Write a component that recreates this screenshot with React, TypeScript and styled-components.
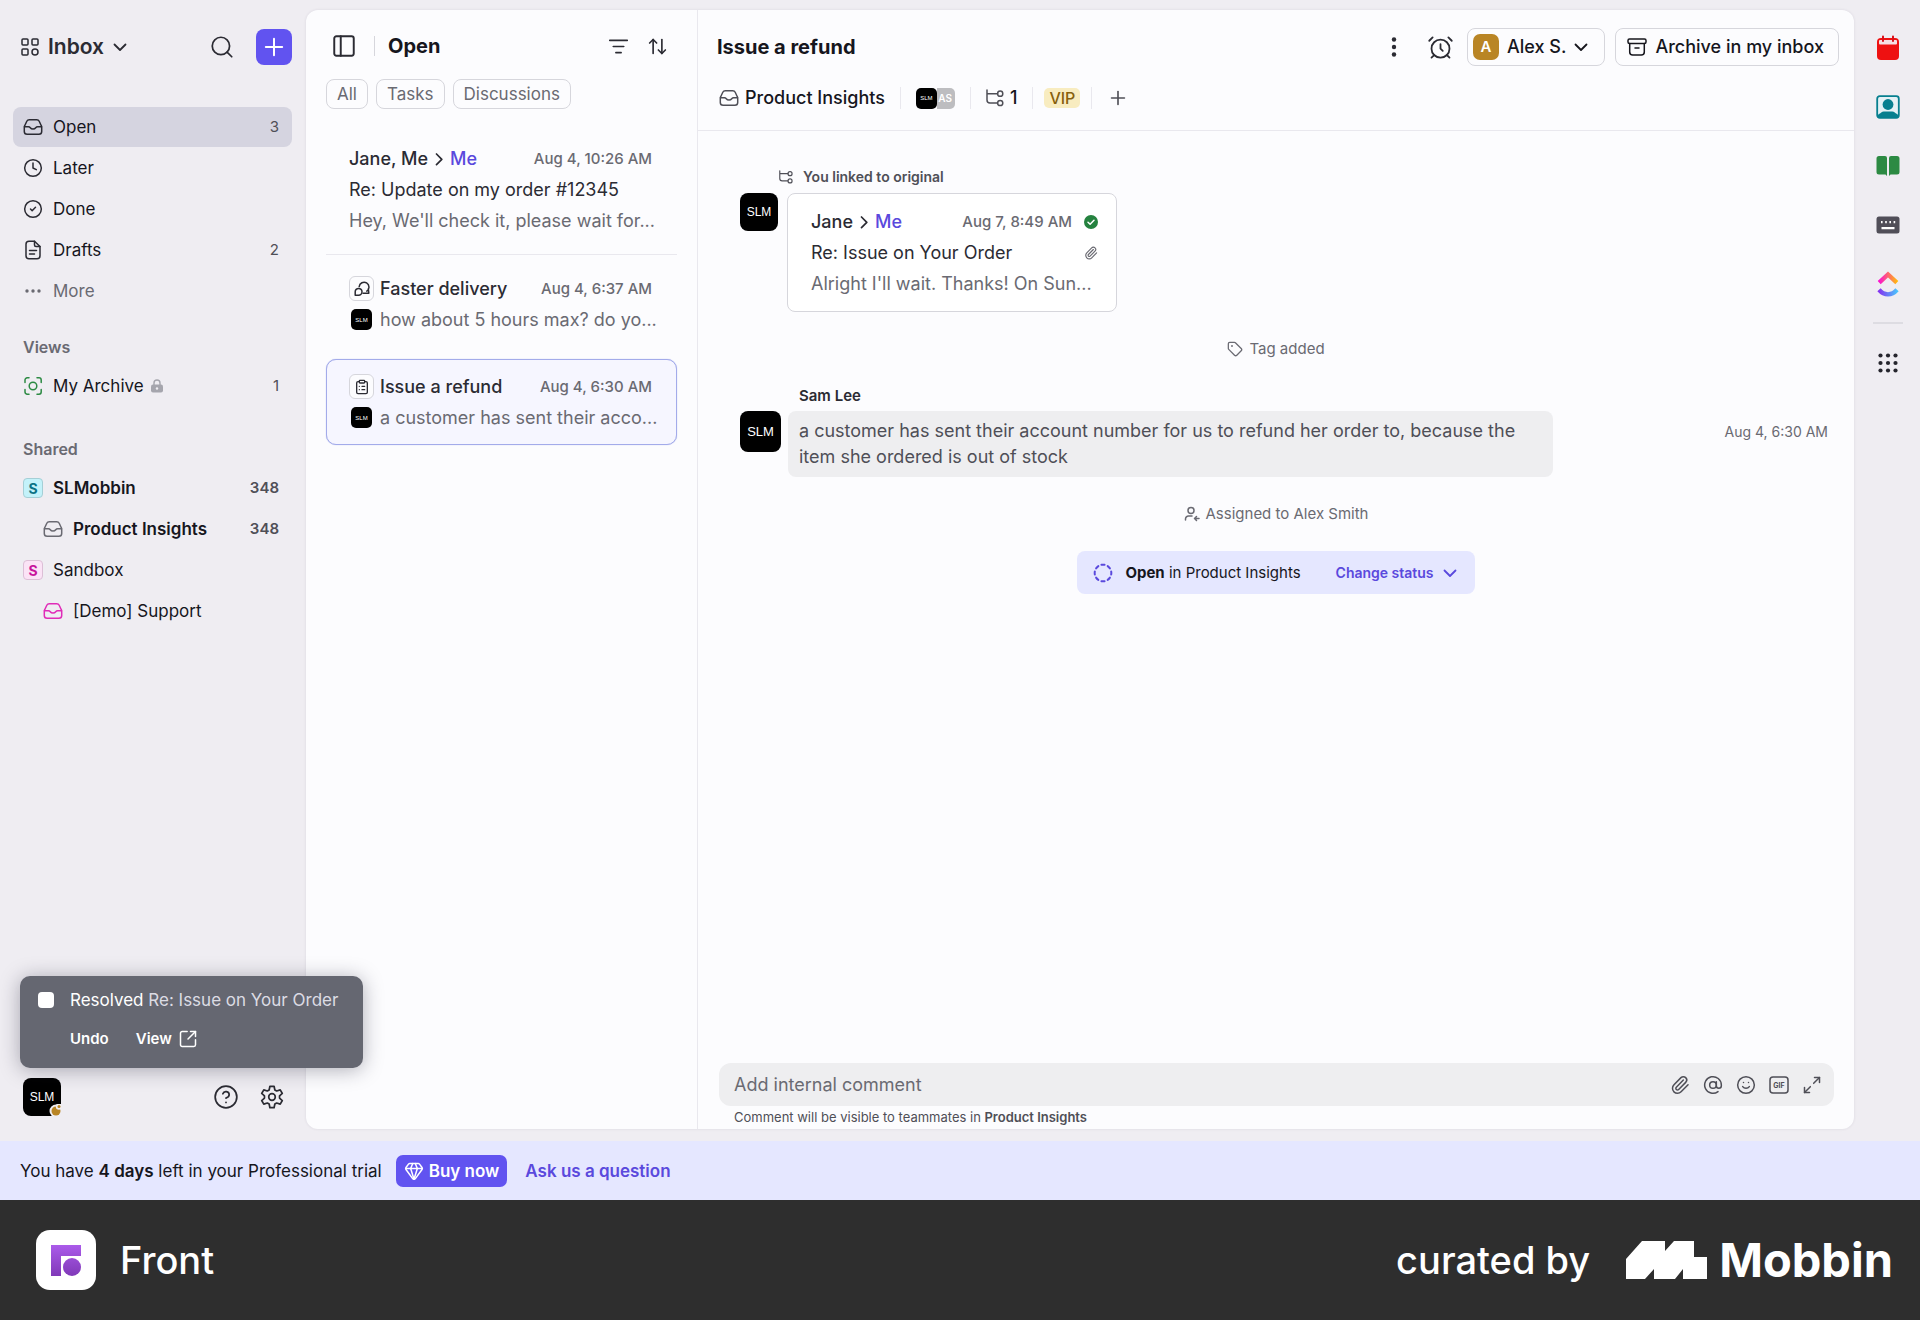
import React from "react";
import styled, { createGlobalStyle } from "styled-components";
import {
  AlarmClock,
  ArrowUpDown,
  AtSign,
  CircleCheck,
  CircleDashed,
  CircleHelp,
  ClipboardList,
  Clock,
  Gem,
  ListFilter,
  Maximize2,
  Paperclip,
  PanelLeft,
  Plus,
  Search,
  Smile,
  SquareArrowOutUpRight,
  Tag,
} from "lucide-react";

const color = {
  ink: "#16161d",
  text: "#2b2b33",
  soft: "#4f4f57",
  muted: "#6a6a72",
  line: "#d6d6dc",
  faint: "#e9e8ee",
  accent: "#5a49dd",
  primary: "#6153f0",
  lilac: "#e5e7ff",
  frame: "#efedf2",
  panel: "#fcfcfe",
};

const GlobalStyle = createGlobalStyle`
  *, *::before, *::after { box-sizing: border-box; }
  body {
    margin: 0;
    background: ${color.frame};
    color: ${color.ink};
    font-family: Inter, "Liberation Sans", sans-serif;
    font-size: 17px;
    line-height: 20px;
  }
  button, input { font: inherit; color: inherit; }
  button { border: 0; padding: 0; background: none; cursor: pointer; }
  a { color: inherit; text-decoration: none; }
  ul { list-style: none; margin: 0; padding: 0; }
  h1, h2, p { margin: 0; }
  svg { display: block; flex: none; }
`;

/* ---------- icons ---------- */

type IconProps = { size?: number; children: React.ReactNode; box?: number };

const Glyph = ({ size = 20, box = 20, children }: IconProps) => (
  <svg
    width={size}
    height={size}
    viewBox={`0 0 ${box} ${box}`}
    fill="none"
    stroke="currentColor"
    strokeWidth="1.5"
    strokeLinecap="round"
    strokeLinejoin="round"
    aria-hidden="true"
  >
    {children}
  </svg>
);

const ChevronDownIcon = () => (
  <Glyph size={14} box={14}>
    <path d="M1.5 4.5L7 10l5.500-5.500" strokeWidth="1.8" />
  </Glyph>
);

const ChevronRightIcon = () => (
  <svg width="8" height="14" viewBox="0 0 8 14" fill="none" stroke="currentColor" strokeWidth="1.7" strokeLinecap="round" strokeLinejoin="round" aria-hidden="true">
    <path d="M1.500 2L6.800 7.300L1.500 12.600" />
  </svg>
);

const InboxIcon = ({ size = 20 }: { size?: number }) => (
  <Glyph size={size}>
    <path d="M1.3 10.2c0-.6.1-1 .4-1.5l2.1-4.4A2.8 2.8 0 0 1 6.3 2.7h7.4a2.8 2.8 0 0 1 2.5 1.6l2.1 4.4c.3.5.4.9.4 1.5v4.3a2.8 2.8 0 0 1-2.8 2.8H4.1a2.8 2.8 0 0 1-2.8-2.8z" />
    <path d="M1.5 9.7H5.4c1 0 1.4.4 1.900 1 .6.8 1.400 1.200 2.700 1.200s2.100-.4 2.700-1.200c.5-.6.9-1 1.900-1h3.900" />
  </Glyph>
);

const AppsIcon = () => (
  <Glyph size={18} box={18}>
    <rect x="1" y="1" width="6" height="6" rx="1" />
    <rect x="11" y="1" width="6" height="6" rx="1" />
    <rect x="1" y="11" width="6" height="6" rx="1" />
    <circle cx="14" cy="14" r="3" />
  </Glyph>
);

const DraftIcon = () => (
  <Glyph>
    <path d="M11.5 1.2H6A3 3 0 0 0 3 4.2v11.6a3 3 0 0 0 3 3h8a3 3 0 0 0 3-3V6.5z" />
    <path d="M11.5 1.2v3.8a1.5 1.5 0 0 0 1.5 1.5h4M6.5 10.5h7M6.5 14h5" />
  </Glyph>
);

const MoreIcon = () => (
  <svg width="20" height="20" viewBox="0 0 20 20" fill="currentColor" aria-hidden="true">
    <circle cx="4" cy="10" r="1.7" />
    <circle cx="10" cy="10" r="1.7" />
    <circle cx="16" cy="10" r="1.7" />
  </svg>
);

const KebabIcon = () => (
  <svg width="24" height="24" viewBox="0 0 24 24" fill="currentColor" aria-hidden="true">
    <circle cx="12" cy="4.5" r="2.2" />
    <circle cx="12" cy="12" r="2.2" />
    <circle cx="12" cy="19.5" r="2.2" />
  </svg>
);

const FocusIcon = () => (
  <Glyph>
    <circle cx="10" cy="10" r="3.8" />
    <path d="M2 6.5V4a2.2 2.2 0 0 1 2.2-2.2H6M14 1.8h2A2.2 2.2 0 0 1 18.2 4v2.5M18.2 13.5V16a2.2 2.2 0 0 1-2.2 2.2h-2M6 18.2H4.2A2.2 2.2 0 0 1 2 16v-2.5" />
  </Glyph>
);

const LockIcon = () => (
  <svg width="14" height="14" viewBox="0 0 14 14" fill="none" aria-hidden="true">
    <path d="M4 6V4a3 3 0 0 1 6 0v2" stroke="#a5a5ad" strokeWidth="1.4" />
    <rect x="1" y="5.5" width="12" height="8" rx="2" fill="#a5a5ad" />
    <circle cx="7" cy="9.5" r="1.2" fill="#efedf2" />
  </svg>
);

const ThreadIcon = ({ size = 18 }: { size?: number }) => (
  <Glyph size={size} box={18}>
    <path d="M1 1v10a3 3 0 0 0 3 3h7.5M1 4.7h10.5" />
    <circle cx="14.2" cy="4.7" r="2.6" />
    <circle cx="14.2" cy="14" r="2.6" />
  </Glyph>
);

const DiscussionIcon = () => (
  <Glyph size={16} box={16}>
    <path d="M5.2 5.600A4.900 4.900 0 1 1 12.800 10.200M12.500 12.200h2.300l-.5-4.500M9 12.200h4" />
    <path d="M1.200 14.200V10.800a3.400 3.400 0 1 1 3.400 3.400z" />
  </Glyph>
);

const AssignIcon = () => (
  <Glyph size={16} box={16}>
    <circle cx="7" cy="4.5" r="3" />
    <path d="M1.5 14v-1a3 3 0 0 1 3-3H8M15 12.5h-4.500M12.500 10.500l-2 2 2 2" />
  </Glyph>
);

const ArchiveIcon = () => (
  <Glyph>
    <rect x="1" y="2" width="18" height="4.5" rx="1.5" />
    <path d="M2.700 6.500v8.500a3 3 0 0 0 3 3h8.600a3 3 0 0 0 3-3V6.500M8 11h4" />
  </Glyph>
);

const DoneBadge = () => (
  <svg width="14" height="14" viewBox="0 0 14 14" aria-label="Resolved" role="img">
    <circle cx="7" cy="7" r="7" fill="#25823f" />
    <path d="M4 7.200l2.100 2.100L10 5.300" fill="none" stroke="#fff" strokeWidth="1.5" strokeLinecap="round" strokeLinejoin="round" />
  </svg>
);

const gearPoints = Array.from({ length: 6 })
  .flatMap((_, i) =>
    [
      [10.9, -11],
      [10.9, 11],
      [7.6, 22],
      [7.6, 38],
    ].map(([r, offset]) => {
      const a = ((i * 60 + offset - 90) * Math.PI) / 180;
      return `${(12 + r * Math.cos(a)).toFixed(2)},${(12 + r * Math.sin(a)).toFixed(2)}`;
    })
  )
  .join(" ");

const GearIcon = () => (
  <Glyph size={24} box={24}>
    <polygon points={gearPoints} strokeWidth="1.7" />
    <circle cx="12" cy="12" r="3.3" strokeWidth="1.7" />
  </Glyph>
);

const GifIcon = () => (
  <svg width="20" height="20" viewBox="0 0 20 20" fill="none" aria-hidden="true">
    <rect x="1" y="2" width="18" height="16" rx="3" stroke="currentColor" strokeWidth="1.5" />
    <text x="10" y="12.5" textAnchor="middle" fontSize="7" fontWeight="700" fill="currentColor">
      GIF
    </text>
  </svg>
);

const CalendarApp = () => (
  <svg width="24" height="26" viewBox="0 0 24 26" aria-hidden="true">
    <rect x="1" y="3" width="22" height="22" rx="4" fill="#ee1111" />
    <rect x="3" y="5" width="18" height="4.5" rx="1" fill="#f5dfe3" />
    <path d="M7 1.5v4.5M17 1.5v4.5" stroke="#d9111b" strokeWidth="2" strokeLinecap="round" />
  </svg>
);

const ContactsApp = () => (
  <svg width="24" height="24" viewBox="0 0 24 24" aria-hidden="true">
    <rect x="1.2" y="1.2" width="21.6" height="21.6" rx="2.5" fill="#e4f1f5" stroke="#077f8f" strokeWidth="1.8" />
    <circle cx="12" cy="9.5" r="5.4" fill="#077f8f" />
    <path d="M2 22.500v-2.500a3 3 0 0 1 2-1.500l1.200-1a4 4 0 0 1 3-1h7.600a4 4 0 0 1 3 1l1.200 1a3 3 0 0 1 2 1.500v2.500z" fill="#077f8f" />
  </svg>
);

const BookApp = () => (
  <svg width="24" height="22" viewBox="0 0 24 22" fill="#2c8a43" aria-hidden="true">
    <path d="M3 1h6a2 2 0 0 1 2 2v18l-1.500-1.500H3A2.500 2.500 0 0 1 .5 17V3.500A2.500 2.500 0 0 1 3 1z" />
    <path d="M21 1h-6a2 2 0 0 0-2 2v18l1.500-1.500H21a2.500 2.500 0 0 0 2.500-2.500V3.500A2.500 2.500 0 0 0 21 1z" />
  </svg>
);

const KeyboardApp = () => (
  <svg width="24" height="18" viewBox="0 0 24 18" aria-hidden="true">
    <rect x=".5" y=".5" width="23" height="17" rx="2.5" fill="#504e58" />
    <path d="M5 5h1.600v2.200H5zM9.200 5h1.600v2.200H9.200zM13.400 5H15v2.200h-1.600zM17.600 5h1.600v2.200h-1.600zM5.500 11h13v2.200h-13z" fill="#fff" />
  </svg>
);

const ClickUpApp = () => (
  <svg width="24" height="28" viewBox="0 0 24 28" fill="none" strokeWidth="4.4" aria-hidden="true">
    <defs>
      <linearGradient id="cu-top" x1="0" x2="1">
        <stop offset="0" stopColor="#fb12d0" />
        <stop offset="1" stopColor="#ffb811" />
      </linearGradient>
      <linearGradient id="cu-bottom" x1="0" x2="1">
        <stop offset="0" stopColor="#8434f0" />
        <stop offset="1" stopColor="#4bc2fc" />
      </linearGradient>
    </defs>
    <path d="M3.200 12.600L12 4.400l8.800 8.200" stroke="url(#cu-top)" />
    <path d="M3 19.800c2.600 3 5.600 4.600 9 4.600s6.400-1.600 9-4.600" stroke="url(#cu-bottom)" />
  </svg>
);

const DotsApp = () => (
  <svg width="20" height="20" viewBox="0 0 20 20" fill="#25252d" aria-hidden="true">
    {[2.5, 10, 17.5].map((y) => [2.5, 10, 17.5].map((x) => <circle key={`${x}-${y}`} cx={x} cy={y} r="2.1" />))}
  </svg>
);

const FrontLogo = () => (
  <svg width="30" height="31" viewBox="0 0 30 31" aria-hidden="true">
    <defs>
      <linearGradient id="front-mark" x1="0" y1="0" x2="0" y2="31" gradientUnits="userSpaceOnUse">
        <stop offset="0" stopColor="#ab5bea" />
        <stop offset="1" stopColor="#8039b8" />
      </linearGradient>
    </defs>
    <path d="M0 0h30v11H10v20H0z" fill="url(#front-mark)" />
    <circle cx="21" cy="22" r="9" fill="url(#front-mark)" />
  </svg>
);

const MobbinMark = () => (
  <svg width="81" height="38" viewBox="0 0 81 38" fill="#fff" aria-hidden="true">
    <path d="M0 18L16 0h23v10l9-10h20v16h13v22H57V28l-8 10H28V28l-9 10H0z" />
  </svg>
);

/* ---------- shell ---------- */

const Page = styled.div`
  display: flex;
  flex-direction: column;
  min-height: 100vh;
`;

const Workspace = styled.div`
  position: relative;
  display: flex;
  flex: 1;
`;

const Sidebar = styled.aside`
  display: flex;
  flex-direction: column;
  flex: none;
  width: 306px;
  padding: 29px 14px 25px 13px;
`;

const Panel = styled.main`
  display: flex;
  flex: 1;
  min-width: 0;
  margin: 10px 0 12px;
  overflow: hidden;
  border-radius: 12px;
  background: ${color.panel};
  box-shadow: 0 0 3px rgba(40, 30, 70, 0.1);
`;

const Rail = styled.nav`
  display: flex;
  flex-direction: column;
  align-items: center;
  flex: none;
  width: 66px;
  padding: 30px 0 0 2px;
`;

const RailButton = styled.button`
  display: grid;
  place-items: center;
  width: 36px;
  height: 36px;
  margin-bottom: 23px;
`;

const RailDivider = styled.hr`
  width: 30px;
  height: 2px;
  margin: -3px 0 21px;
  border: 0;
  background: #dddce2;
`;

const Avatar = styled.span<{ $size: number; $font: number; $radius: number }>`
  position: relative;
  display: grid;
  place-items: center;
  flex: none;
  width: ${(p) => p.$size}px;
  height: ${(p) => p.$size}px;
  border-radius: ${(p) => p.$radius}px;
  background: #000;
  color: #fff;
  font-family: "Liberation Sans", sans-serif;
  font-size: ${(p) => p.$font}px;
  line-height: 1;
`;

/* ---------- sidebar ---------- */

const SidebarHeader = styled.header`
  display: flex;
  align-items: center;
  margin-bottom: 42px;
  padding-left: 8px;
  color: ${color.text};
`;

const SpaceButton = styled.button`
  display: flex;
  align-items: center;
  gap: 9px;
  margin-right: auto;
  font-size: 21px;
  font-weight: 600;
  line-height: 24px;
`;

const SquareButton = styled.button`
  display: grid;
  place-items: center;
  width: 36px;
  height: 36px;
`;

const ComposeButton = styled(SquareButton)`
  margin-left: 16px;
  border-radius: 8px;
  background: ${color.primary};
  color: #fff;
`;

const NavGroup = styled.ul`
  display: grid;
  gap: 1px;
`;

const NavHeading = styled.h2<{ $gap: number }>`
  margin: ${(p) => p.$gap}px 0 9px;
  padding-left: 10px;
  color: ${color.muted};
  font-size: 16px;
  font-weight: 600;
  line-height: 20px;
`;

const NavLink = styled.a<{ $active?: boolean; $nested?: boolean; $strong?: boolean; $quiet?: boolean }>`
  display: flex;
  align-items: center;
  gap: 10px;
  height: 40px;
  padding: 0 13px 0 ${(p) => (p.$nested ? 30 : 10)}px;
  border-radius: 8px;
  background: ${(p) => (p.$active ? "#d5d4e0" : "transparent")};
  color: ${(p) => (p.$quiet ? color.muted : color.ink)};
  font-weight: ${(p) => (p.$strong ? 600 : 400)};
`;

const NavIcon = styled.span<{ $color?: string }>`
  color: ${(p) => p.$color ?? color.text};
`;

const NavLabel = styled.span`
  display: flex;
  align-items: center;
  gap: 6px;
  margin-right: auto;
`;

const NavCount = styled.span`
  color: ${color.soft};
  font-size: 15px;
`;

const TeamBadge = styled.span<{ $pink?: boolean }>`
  display: grid;
  place-items: center;
  width: 20px;
  height: 20px;
  border: 1px solid ${(p) => (p.$pink ? "#dcbfd6" : "#a5cfd6")};
  border-radius: 4px;
  background: ${(p) => (p.$pink ? "#fbe3f6" : "#c3f2fa")};
  color: ${(p) => (p.$pink ? "#c8149c" : "#0b7285")};
  font-size: 14px;
  font-weight: 700;
`;

const SidebarFooter = styled.footer`
  display: flex;
  align-items: center;
  margin-top: auto;
  padding: 0 2px 0 10px;
  color: ${color.text};
`;

const FooterTools = styled.div`
  display: flex;
  gap: 10px;
  margin-left: auto;
`;

const AwayMark = styled.span`
  position: absolute;
  right: 0;
  bottom: 0;
`;

/* ---------- conversation list ---------- */

const ListPane = styled.section`
  flex: none;
  width: 392px;
  padding: 18px 20px;
  border-right: 1px solid ${color.faint};
`;

const ListHeader = styled.header`
  display: flex;
  align-items: center;
  height: 36px;
  color: ${color.text};
`;

const ListTitle = styled.h2`
  margin: 0 auto 0 13px;
  color: ${color.ink};
  font-size: 20px;
  font-weight: 700;
  line-height: 24px;
`;

const Rule = styled.span<{ $h?: number }>`
  width: 1px;
  height: ${(p) => p.$h ?? 20}px;
  background: ${(p) => (p.$h ? color.faint : color.line)};
`;

const PanelToggle = styled(SquareButton)`
  margin: 0 12px 0 0;
`;

const SmallTool = styled.button`
  display: grid;
  place-items: center;
  width: 39px;
  height: 36px;
`;

const Filters = styled.div`
  display: flex;
  gap: 8px;
  margin: 15px 0 22px;
`;

const Pill = styled.button`
  height: 30px;
  padding: 0 10px;
  border: 1px solid ${color.line};
  border-radius: 8px;
  color: ${color.muted};
  font-size: 17px;
  line-height: 20px;
`;

const Item = styled.a<{ $selected?: boolean }>`
  display: block;
  padding: 11px 24px 11px 22px;
  border: 1px solid ${(p) => (p.$selected ? "#a3abea" : "transparent")};
  border-radius: 10px;
  background: ${(p) => (p.$selected ? "#f6f6ff" : "transparent")};
  box-shadow: ${(p) => (p.$selected ? "0 0 1px #a3abea" : "none")};
`;

const ItemDivider = styled.hr`
  height: 1px;
  margin: 6px 0;
  border: 0;
  background: ${color.faint};
`;

const ItemGap = styled.li`
  height: 12px;
`;

const Line = styled.div`
  display: flex;
  align-items: center;
  gap: 6px;
  height: 31px;
  color: ${color.text};
  font-size: 18px;
  white-space: nowrap;
`;

const Sender = styled.span`
  display: flex;
  align-items: center;
  gap: 7px;
  margin-right: auto;
  font-weight: 500;
`;

const Me = styled.span`
  color: ${color.accent};
`;

const Stamp = styled.time<{ $small?: boolean }>`
  color: ${color.muted};
  font-size: ${(p) => (p.$small ? 14 : 15)}px;
  font-weight: ${(p) => (p.$small ? 400 : 500)};
  white-space: nowrap;
`;

const Preview = styled.span`
  color: ${color.muted};
`;

const IconSlot = styled.span`
  display: grid;
  place-items: center;
  flex: none;
  width: 25px;
`;

const TypeBadge = styled(IconSlot)`
  height: 25px;
  border: 1px solid ${color.line};
  border-radius: 6px;
  background: ${color.panel};
`;

/* ---------- conversation ---------- */

const Detail = styled.section`
  display: flex;
  flex: 1;
  flex-direction: column;
  min-width: 0;
`;

const DetailHeader = styled.header`
  padding: 18px 15px 18px 19px;
  border-bottom: 1px solid ${color.faint};
`;

const TitleRow = styled.div`
  display: flex;
  align-items: center;
  height: 38px;
  margin-bottom: 18px;
  color: ${color.text};
`;

const DetailTitle = styled.h1`
  margin-right: auto;
  color: ${color.ink};
  font-size: 20px;
  font-weight: 700;
  line-height: 26px;
`;

const WideTool = styled.button`
  display: grid;
  place-items: center;
  width: 46px;
  height: 38px;
`;

const ButtonPair = styled.div`
  display: flex;
  gap: 10px;
  margin-left: 4px;
`;

const OutlineButton = styled.button<{ $tight?: boolean }>`
  display: flex;
  align-items: center;
  gap: 8px;
  height: 38px;
  padding: 0 ${(p) => (p.$tight ? "16px 0 5px" : "14px 0 11px")};
  border: 1px solid ${color.line};
  border-radius: 8px;
  color: ${color.ink};
  font-size: 18px;
  font-weight: 500;
`;

const Initial = styled.span`
  display: grid;
  place-items: center;
  width: 26px;
  height: 26px;
  border-radius: 7px;
  background: #b98525;
  color: #fff;
  font-size: 15px;
  font-weight: 600;
`;

const MetaRow = styled.div`
  display: flex;
  align-items: center;
  gap: 15px;
  height: 28px;
  padding-left: 2px;
  color: ${color.soft};
`;

const MetaButton = styled.button`
  display: flex;
  align-items: center;
  gap: 6px;
  font-size: 18px;
  font-weight: 500;
  line-height: 24px;

  span {
    color: ${color.ink};
  }
`;

const Participants = styled.div`
  display: flex;
`;

const FadedInitials = styled.span`
  display: grid;
  place-items: center end;
  width: 18px;
  height: 21px;
  padding-right: 3px;
  border-radius: 0 5px 5px 0;
  background: #bdbdc0;
  color: #fff;
  font-size: 10px;
  font-weight: 600;
`;

const TagChip = styled.span`
  margin: 0 -4px;
  padding: 0 5px;
  border-radius: 5px;
  background: #f8ecc0;
  color: #87600c;
  font-size: 16px;
  font-weight: 500;
  line-height: 20px;
`;

const Thread = styled.div`
  display: flex;
  flex: 1;
  flex-direction: column;
  gap: 27px;
  padding: 36px 0 24px;
`;

const Entry = styled.article`
  padding: 0 26px 0 42px;
`;

const EntryRow = styled.div<{ $gap: number }>`
  display: flex;
  align-items: flex-start;
  gap: ${(p) => p.$gap}px;
`;

const LinkedNote = styled.p`
  display: flex;
  align-items: center;
  gap: 10px;
  margin: 0 0 6px 39px;
  color: ${color.soft};
  font-size: 14px;
  font-weight: 600;
`;

const LinkedCard = styled.a`
  flex: 0 1 330px;
  min-width: 0;
  padding: 12px 18px 12px 23px;
  border: 1px solid ${color.line};
  border-radius: 8px;
  background: #fff;
`;

const CardStatus = styled.span`
  display: grid;
  justify-items: end;
  width: 20px;
  color: ${color.muted};
`;

const Subject = styled.span`
  margin-right: auto;
`;

const Event = styled.p`
  display: flex;
  align-items: center;
  justify-content: center;
  gap: 6px;
  color: ${color.muted};
  font-size: 15px;
`;

const Author = styled.p`
  margin: 0 0 5px 59px;
  color: ${color.text};
  font-size: 15px;
  font-weight: 600;
`;

const Bubble = styled.p`
  flex: 0 1 765px;
  padding: 7px 11px;
  border-radius: 8px;
  background: #eeeef0;
  color: ${color.soft};
  font-size: 18px;
  line-height: 26px;
`;

const BubbleTime = styled.div`
  margin-left: auto;
  padding-top: 10px;
`;

const StatusBar = styled.div`
  display: flex;
  align-items: center;
  align-self: center;
  gap: 12px;
  height: 43px;
  padding: 0 18px 0 16px;
  border-radius: 8px;
  background: ${color.lilac};
  font-size: 15px;
`;

const StatusButton = styled.button`
  display: flex;
  align-items: center;
  gap: 9px;
  margin-left: 23px;
  color: ${color.accent};
  font-size: 14px;
  font-weight: 600;
`;

const Accent = styled.span`
  color: ${color.accent};
`;

const Composer = styled.form`
  display: flex;
  align-items: center;
  gap: 13px;
  height: 43px;
  margin: 0 20px 0 21px;
  padding: 0 12px 0 15px;
  border-radius: 12px;
  background: #eeeef0;
  color: ${color.soft};
`;

const CommentInput = styled.input`
  flex: 1;
  min-width: 0;
  padding: 0;
  border: 0;
  outline: 0;
  background: none;
  font-size: 18px;

  &::placeholder {
    color: ${color.muted};
    opacity: 1;
  }
`;

const ComposerNote = styled.p`
  padding: 3px 36px 4px;
  color: ${color.soft};
  font-size: 13px;
  line-height: 16px;

  b {
    font-weight: 600;
  }
`;

/* ---------- toast ---------- */

const Toast = styled.div`
  position: absolute;
  bottom: 73px;
  left: 20px;
  display: grid;
  grid-template-columns: 16px 1fr;
  gap: 14px 16px;
  align-items: center;
  width: 343px;
  padding: 12px 18px 17px;
  border-radius: 10px;
  background: #656771;
  color: #fff;
  box-shadow: 0 2px 20px rgba(30, 30, 50, 0.35);
`;

const ToastCheck = styled.input`
  appearance: none;
  width: 16px;
  height: 16px;
  margin: 0;
  border-radius: 4px;
  background: #fff;
`;

const ToastText = styled.label`
  font-size: 17px;
  line-height: 24px;
  white-space: nowrap;

  span {
    color: #dcdce4;
  }
`;

const ToastActions = styled.div`
  display: flex;
  align-items: center;
  grid-column: 2;
  gap: 27px;
`;

const ToastButton = styled.button`
  display: flex;
  align-items: center;
  gap: 6px;
  height: 25px;
  font-size: 15px;
  font-weight: 600;
`;

/* ---------- banner and footer ---------- */

const Banner = styled.section`
  display: flex;
  align-items: center;
  height: 59px;
  padding-left: 20px;
  background: ${color.lilac};

  b {
    font-weight: 600;
  }
`;

const BuyButton = styled.button`
  display: flex;
  align-items: center;
  gap: 5px;
  height: 32px;
  margin: 0 18px 0 14px;
  padding: 0 8px;
  border-radius: 7px;
  background: ${color.primary};
  color: #fff;
  font-weight: 600;
`;

const AskLink = styled.a`
  color: ${color.accent};
  font-weight: 600;
`;

const Credits = styled.footer`
  display: flex;
  align-items: center;
  height: 120px;
  padding: 0 27px 0 36px;
  background: #2e2e2e;
  color: #fff;
  font-size: 38px;
  font-weight: 500;
  line-height: 48px;
`;

const LogoTile = styled.span`
  display: grid;
  place-items: center;
  width: 60px;
  height: 60px;
  margin-right: 24px;
  border-radius: 14px;
  background: #fff;
`;

const CreditBy = styled.span`
  margin: 0 36px 0 auto;
`;

const Brand = styled.span`
  display: flex;
  align-items: center;
  gap: 12px;
  font-size: 47px;
  font-weight: 700;
`;

/* ---------- data ---------- */

type NavEntry = {
  label: string;
  icon: React.ReactNode;
  count?: number;
  active?: boolean;
  quiet?: boolean;
  strong?: boolean;
  nested?: boolean;
  tint?: string;
  locked?: boolean;
};

const personal: NavEntry[] = [
  { label: "Open", icon: <InboxIcon />, count: 3, active: true },
  { label: "Later", icon: <Clock size={20} strokeWidth={1.8} /> },
  { label: "Done", icon: <CircleCheck size={20} strokeWidth={1.8} /> },
  { label: "Drafts", icon: <DraftIcon />, count: 2 },
  { label: "More", icon: <MoreIcon />, quiet: true },
];

const views: NavEntry[] = [{ label: "My Archive", icon: <FocusIcon />, count: 1, tint: "#2c8a43", locked: true }];

const shared: NavEntry[] = [
  { label: "SLMobbin", icon: <TeamBadge>S</TeamBadge>, count: 348, strong: true },
  { label: "Product Insights", icon: <InboxIcon />, count: 348, strong: true, nested: true, tint: color.muted },
  { label: "Sandbox", icon: <TeamBadge $pink>S</TeamBadge> },
  { label: "[Demo] Support", icon: <InboxIcon />, nested: true, tint: "#e02cb8" },
];

const NavList = ({ entries }: { entries: NavEntry[] }) => (
  <NavGroup>
    {entries.map((entry) => (
      <li key={entry.label}>
        <NavLink href="#" $active={entry.active} $nested={entry.nested} $strong={entry.strong} $quiet={entry.quiet}>
          <NavIcon $color={entry.quiet ? color.muted : entry.tint}>{entry.icon}</NavIcon>
          <NavLabel>
            {entry.label}
            {entry.locked && <LockIcon />}
          </NavLabel>
          {entry.count !== undefined && <NavCount>{entry.count}</NavCount>}
        </NavLink>
      </li>
    ))}
  </NavGroup>
);

const tasks = [
  { title: "Faster delivery", time: "Aug 4, 6:37 AM", text: "how about 5 hours max? do yo...", icon: <DiscussionIcon /> },
  {
    title: "Issue a refund",
    time: "Aug 4, 6:30 AM",
    text: "a customer has sent their acco...",
    icon: <ClipboardList size={16} strokeWidth={2} />,
    selected: true,
  },
];

const SmallAvatar = () => (
  <Avatar $size={21} $font={6} $radius={5}>
    SLM
  </Avatar>
);

export default function App() {
  return (
    <>
      <GlobalStyle />
      <Page>
        <Workspace>
          <Sidebar>
            <SidebarHeader>
              <SpaceButton type="button" aria-haspopup="menu">
                <AppsIcon />
                Inbox
                <ChevronDownIcon />
              </SpaceButton>
              <SquareButton type="button" aria-label="Search">
                <Search size={26} strokeWidth={1.6} />
              </SquareButton>
              <ComposeButton type="button" aria-label="Compose">
                <Plus size={28} strokeWidth={1.7} />
              </ComposeButton>
            </SidebarHeader>
            <nav aria-label="Inboxes">
              <NavList entries={personal} />
              <NavHeading $gap={26}>Views</NavHeading>
              <NavList entries={views} />
              <NavHeading $gap={33}>Shared</NavHeading>
              <NavList entries={shared} />
            </nav>
            <SidebarFooter>
              <Avatar $size={38} $font={12} $radius={8}>
                SLM
                <AwayMark>
                  <svg width="12" height="12" viewBox="0 0 12 12" aria-hidden="true">
                    <circle cx="7" cy="7" r="6.5" fill="#efedf2" />
                    <circle cx="7" cy="7" r="4.500" fill="#b98525" />
                    <circle cx="10" cy="2.5" r="3.2" fill="#efedf2" />
                    <circle cx="10" cy="2.500" r="1.500" fill="#b98525" />
                  </svg>
                </AwayMark>
              </Avatar>
              <FooterTools>
                <SquareButton type="button" aria-label="Help">
                  <CircleHelp size={26} strokeWidth={1.6} />
                </SquareButton>
                <SquareButton type="button" aria-label="Settings">
                  <GearIcon />
                </SquareButton>
              </FooterTools>
            </SidebarFooter>
          </Sidebar>

          <Panel>
            <ListPane>
              <ListHeader>
                <PanelToggle type="button" aria-label="Toggle sidebar">
                  <PanelLeft size={26} strokeWidth={1.8} />
                </PanelToggle>
                <Rule />
                <ListTitle>Open</ListTitle>
                <SmallTool type="button" aria-label="Filter">
                  <ListFilter size={21} strokeWidth={1.9} />
                </SmallTool>
                <SmallTool type="button" aria-label="Sort">
                  <ArrowUpDown size={21} strokeWidth={1.9} />
                </SmallTool>
              </ListHeader>
              <Filters>
                <Pill type="button">All</Pill>
                <Pill type="button">Tasks</Pill>
                <Pill type="button">Discussions</Pill>
              </Filters>
              <ul>
                <li>
                  <Item href="#">
                    <Line>
                      <Sender>
                        Jane, Me
                        <ChevronRightIcon />
                        <Me>Me</Me>
                      </Sender>
                      <Stamp>Aug 4, 10:26 AM</Stamp>
                    </Line>
                    <Line>Re: Update on my order #12345</Line>
                    <Line>
                      <Preview>Hey, We'll check it, please wait for...</Preview>
                    </Line>
                  </Item>
                  <ItemDivider />
                </li>
                {tasks.map((task, i) => (
                  <React.Fragment key={task.title}>
                    {i > 0 && <ItemGap role="presentation" />}
                    <li>
                      <Item href="#" $selected={task.selected}>
                        <Line>
                          <TypeBadge>{task.icon}</TypeBadge>
                          <Sender>{task.title}</Sender>
                          <Stamp>{task.time}</Stamp>
                        </Line>
                        <Line>
                          <IconSlot>
                            <SmallAvatar />
                          </IconSlot>
                          <Preview>{task.text}</Preview>
                        </Line>
                      </Item>
                    </li>
                  </React.Fragment>
                ))}
              </ul>
            </ListPane>

            <Detail>
              <DetailHeader>
                <TitleRow>
                  <DetailTitle>Issue a refund</DetailTitle>
                  <WideTool type="button" aria-label="More actions">
                    <KebabIcon />
                  </WideTool>
                  <WideTool type="button" aria-label="Snooze">
                    <AlarmClock size={27} strokeWidth={1.6} />
                  </WideTool>
                  <ButtonPair>
                    <OutlineButton type="button" $tight aria-haspopup="menu">
                      <Initial>A</Initial>
                      Alex S.
                      <ChevronDownIcon />
                    </OutlineButton>
                    <OutlineButton type="button">
                      <ArchiveIcon />
                      Archive in my inbox
                    </OutlineButton>
                  </ButtonPair>
                </TitleRow>
                <MetaRow>
                  <MetaButton type="button">
                    <InboxIcon />
                    <span>Product Insights</span>
                  </MetaButton>
                  <Rule $h={22} />
                  <Participants>
                    <SmallAvatar />
                    <FadedInitials>AS</FadedInitials>
                  </Participants>
                  <Rule $h={22} />
                  <MetaButton type="button">
                    <ThreadIcon />
                    <span>1</span>
                  </MetaButton>
                  <Rule $h={22} />
                  <TagChip>VIP</TagChip>
                  <Rule $h={22} />
                  <MetaButton type="button" aria-label="Add tag">
                    <Plus size={22} strokeWidth={1.8} />
                  </MetaButton>
                </MetaRow>
              </DetailHeader>

              <Thread>
                <Entry>
                  <LinkedNote>
                    <ThreadIcon size={14} />
                    You linked to original
                  </LinkedNote>
                  <EntryRow $gap={9}>
                    <Avatar $size={38} $font={12} $radius={8}>
                      SLM
                    </Avatar>
                    <LinkedCard href="#">
                      <Line>
                        <Sender>
                          Jane
                          <ChevronRightIcon />
                          <Me>Me</Me>
                        </Sender>
                        <Stamp>Aug 7, 8:49 AM</Stamp>
                        <CardStatus>
                          <DoneBadge />
                        </CardStatus>
                      </Line>
                      <Line>
                        <Subject>Re: Issue on Your Order</Subject>
                        <CardStatus>
                          <Paperclip size={14} strokeWidth={2} />
                        </CardStatus>
                      </Line>
                      <Line>
                        <Preview>Alright I'll wait. Thanks! On Sun...</Preview>
                      </Line>
                    </LinkedCard>
                  </EntryRow>
                </Entry>

                <Event>
                  <Tag size={16} strokeWidth={1.9} />
                  Tag added
                </Event>

                <Entry>
                  <Author>Sam Lee</Author>
                  <EntryRow $gap={7}>
                    <Avatar $size={41} $font={13} $radius={8}>
                      SLM
                    </Avatar>
                    <Bubble>
                      a customer has sent their account number for us to refund her order to, because the item she ordered is out of
                      stock
                    </Bubble>
                    <BubbleTime>
                      <Stamp $small>Aug 4, 6:30 AM</Stamp>
                    </BubbleTime>
                  </EntryRow>
                </Entry>

                <Event>
                  <AssignIcon />
                  Assigned to Alex Smith
                </Event>

                <StatusBar>
                  <Accent>
                    <CircleDashed size={20} strokeWidth={2.4} />
                  </Accent>
                  <span>
                    <b>Open</b> in Product Insights
                  </span>
                  <StatusButton type="button" aria-haspopup="menu">
                    Change status
                    <ChevronDownIcon />
                  </StatusButton>
                </StatusBar>
              </Thread>

              <Composer onSubmit={(e) => e.preventDefault()}>
                <CommentInput type="text" aria-label="Add internal comment" placeholder="Add internal comment" />
                <button type="button" aria-label="Attach file">
                  <Paperclip size={20} strokeWidth={1.8} />
                </button>
                <button type="button" aria-label="Mention">
                  <AtSign size={20} strokeWidth={1.8} />
                </button>
                <button type="button" aria-label="Emoji">
                  <Smile size={20} strokeWidth={1.8} />
                </button>
                <button type="button" aria-label="GIF">
                  <GifIcon />
                </button>
                <button type="button" aria-label="Expand">
                  <Maximize2 size={20} strokeWidth={1.8} />
                </button>
              </Composer>
              <ComposerNote>
                Comment will be visible to teammates in <b>Product Insights</b>
              </ComposerNote>
            </Detail>
          </Panel>

          <Rail aria-label="Apps">
            <RailButton type="button" aria-label="Calendar">
              <CalendarApp />
            </RailButton>
            <RailButton type="button" aria-label="Contacts">
              <ContactsApp />
            </RailButton>
            <RailButton type="button" aria-label="Knowledge base">
              <BookApp />
            </RailButton>
            <RailButton type="button" aria-label="Shortcuts">
              <KeyboardApp />
            </RailButton>
            <RailButton type="button" aria-label="ClickUp">
              <ClickUpApp />
            </RailButton>
            <RailDivider />
            <RailButton type="button" aria-label="All apps">
              <DotsApp />
            </RailButton>
          </Rail>

          <Toast role="status">
            <ToastCheck type="checkbox" id="resolved" />
            <ToastText htmlFor="resolved">
              Resolved <span>Re: Issue on Your Order</span>
            </ToastText>
            <ToastActions>
              <ToastButton type="button">Undo</ToastButton>
              <ToastButton type="button">
                View
                <SquareArrowOutUpRight size={20} strokeWidth={1.8} />
              </ToastButton>
            </ToastActions>
          </Toast>
        </Workspace>

        <Banner aria-label="Trial">
          <span>
            You have <b>4 days</b> left in your Professional trial
          </span>
          <BuyButton type="button">
            <Gem size={20} strokeWidth={1.8} />
            Buy now
          </BuyButton>
          <AskLink href="#">Ask us a question</AskLink>
        </Banner>

        <Credits>
          <LogoTile>
            <FrontLogo />
          </LogoTile>
          <span>Front</span>
          <CreditBy>curated by</CreditBy>
          <Brand>
            <MobbinMark />
            Mobbin
          </Brand>
        </Credits>
      </Page>
    </>
  );
}
